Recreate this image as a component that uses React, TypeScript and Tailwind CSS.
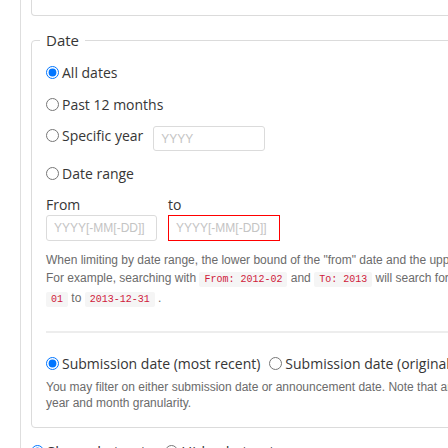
import React from 'react';

const code = 'rounded-[2px] bg-[#f5f5f5] px-[5px] py-[2px] font-["Liberation_Mono",monospace] text-[10px] text-[#d01a3a]';

export default function App() {
  return (
    <div className="h-[448px] w-[448px] overflow-hidden bg-white font-['Open_Sans',sans-serif] text-[14px] text-[#363636]">
      <div className="ml-[20px] w-[1000px] border-l border-[#dedede] pl-[10px]">
        {/* bottom of the panel above */}
        <div className="h-[16px] rounded-b-[4px] border-x border-b border-[#dbdbdb]" />

        <fieldset className="mt-[13px] rounded-[4px] border border-[#dbdbdb] pl-[8px] pb-[16px]">
          <legend className="px-[6px] text-[15px] leading-[22px]">Date</legend>
          <div className="pl-[6px]">
            <label className="mt-[5px] flex h-[32px] items-center">
              <input type="radio" name="date" defaultChecked className="mr-[3px] h-[13px] w-[13px]" />
              All dates
            </label>
            <label className="flex h-[32px] items-center">
              <input type="radio" name="date" className="mr-[3px] h-[13px] w-[13px]" />
              Past 12 months
            </label>
            <div className="flex h-[31px] items-center">
              <label className="flex items-center">
                <input type="radio" name="date" className="mr-[3px] h-[13px] w-[13px]" />
                Specific year
              </label>
              <input
                placeholder="YYYY"
                className="ml-[10px] mt-[6px] h-[25px] w-[112px] rounded-[3px] border border-[#dbdbdb] px-[7px] font-['Liberation_Sans',sans-serif] text-[12px] placeholder:text-[#c4c4c4]"
              />
            </div>
            <label className="mt-[6px] flex h-[32px] items-center">
              <input type="radio" name="date" className="mr-[3px] h-[13px] w-[13px]" />
              Date range
            </label>

            <div className="mt-[6px] flex gap-[11px]">
              <div className="flex w-[111px] flex-col">
                <span className="leading-[20px]">From</span>
                <input
                  placeholder="YYYY[-MM[-DD]]"
                  className="h-[26px] w-[111px] rounded-[3px] border border-[#dbdbdb] px-[7px] font-['Liberation_Sans',sans-serif] text-[12px] placeholder:text-[#c4c4c4]"
                />
              </div>
              <div className="flex w-[112px] flex-col">
                <span className="leading-[20px]">to</span>
                <input
                  placeholder="YYYY[-MM[-DD]]"
                  className="h-[26px] w-[112px] border border-[#ff0000] px-[7px] font-['Liberation_Sans',sans-serif] text-[12px] placeholder:text-[#c4c4c4]"
                />
              </div>
            </div>

            <p className="mt-[10px] font-['Liberation_Sans',sans-serif] text-[12px] leading-[18px] text-[#6b6b6b]">
              When limiting by date range, the lower bound of the "from" date and the upper bound of the "to" date are used.
              <br />
              For example, searching with <code className={code}>From: 2012-02</code> and <code className={code}>To: 2013</code>{' '}
              will search for papers submitted from <code className={code}>2012-02-</code>
              <br />
              <code className={code}>01</code> to <code className={code}>2013-12-31</code> .
            </p>

            <hr className="mt-[22px] border-t-2 border-[#ededed]" />

            <div className="mt-[15px] flex h-[31px] items-center gap-[9px]">
              <label className="flex items-center">
                <input type="radio" name="dtype" defaultChecked className="mr-[3px] h-[13px] w-[13px]" />
                Submission date (most recent)
              </label>
              <label className="flex items-center">
                <input type="radio" name="dtype" className="mr-[3px] h-[13px] w-[13px]" />
                Submission date (original)
              </label>
              <label className="flex items-center">
                <input type="radio" name="dtype" className="mr-[3px] h-[13px] w-[13px]" />
                Announcement date
              </label>
            </div>
            <p className="w-[640px] font-['Liberation_Sans',sans-serif] text-[12px] leading-[16px] text-[#6b6b6b]">
              You may filter on either submission date or announcement date. Note that announcement date supports only
              <br />
              year and month granularity.
            </p>
          </div>
        </fieldset>

        <div className="mt-[7px] flex h-[32px] items-center gap-[12px] text-[15px]">
          <label className="flex items-center">
            <input type="radio" name="abs" defaultChecked className="mr-[3px] h-[13px] w-[13px]" />
            Show abstracts
          </label>
          <label className="flex items-center">
            <input type="radio" name="abs" className="mr-[3px] h-[13px] w-[13px]" />
            Hide abstracts
          </label>
        </div>
      </div>
    </div>
  );
}
